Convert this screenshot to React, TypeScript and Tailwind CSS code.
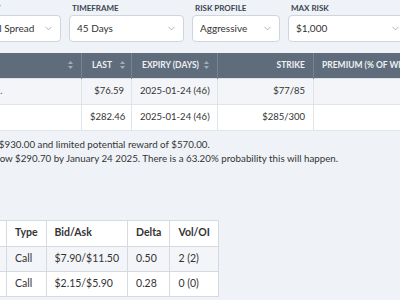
import React from "react";
import { ChevronDown } from "lucide-react";

const SortIcon = () => (
  <svg width="5" height="8" viewBox="0 0 5 8" className="shrink-0 fill-[#a3adb8]">
    <path d="M2.5 0 L5 3 H0 Z" />
    <path d="M2.5 8 L5 5 H0 Z" />
  </svg>
);

interface SelectProps {
  label: string;
  value: string;
  className: string;
}

const Select: React.FC<SelectProps> = ({ label, value, className }) => (
  <div className={`flex shrink-0 flex-col ${className}`}>
    <span className="mb-[2px] h-[9px] pl-[3px] text-[8px] font-bold uppercase leading-[9px] text-[#3a4350]">
      {label}
    </span>
    <div className="flex h-[27px] items-center justify-between rounded-[4px] border border-[#cfd5dc] bg-white pl-[7px] pr-[6px] text-[10px] text-[#333]">
      <span>{value}</span>
      <ChevronDown size={11} strokeWidth={1.5} className="text-[#8a939d]" />
    </div>
  </div>
);

const headCell = "border-x border-[#77838f] px-[8px] text-[8.5px] font-bold uppercase text-[#eef1f4] whitespace-nowrap";
const bodyCell = "border border-[#e0e4e9] px-[8px] whitespace-nowrap";
const legCell = "border border-[#d5dae0] px-[8px] whitespace-nowrap";

const spreads = [
  { name: "Adobe Inc.", last: "$76.59", expiry: "2025-01-24 (46)", strike: "$77/85", premium: "$3.05 (38.1%)" },
  { name: "", last: "$282.46", expiry: "2025-01-24 (46)", strike: "$285/300", premium: "$5.70 (38.0%)" },
];

const legs = [
  { strike: "$285", type: "Call", bidAsk: "$7.90/$11.50", delta: "0.50", volOi: "2 (2)" },
  { strike: "$300", type: "Call", bidAsk: "$2.15/$5.90", delta: "0.28", volOi: "0 (0)" },
];

export default function App() {
  return (
    <div className="h-[300px] w-[400px] overflow-hidden bg-[#eff3f7] font-['Lato',sans-serif] text-[#333]">
      <div className="-ml-[51px] w-[560px] pt-[4px]">
        <div className="flex gap-[8px] pl-[9px]">
          <Select label="Strategy" value="Bull Call Spread" className="w-[103px]" />
          <Select label="Timeframe" value="45 Days" className="w-[115px]" />
          <Select label="Risk Profile" value="Aggressive" className="w-[88px]" />
          <Select label="Max Risk" value="$1,000" className="w-[120px]" />
        </div>

        <table className="mt-[11px] w-[520px] table-fixed border-collapse text-[9.5px]">
          <colgroup>
            <col className="w-[132px]" />
            <col className="w-[50px]" />
            <col className="w-[86px]" />
            <col className="w-[96px]" />
            <col className="w-[156px]" />
          </colgroup>
          <thead>
            <tr className="h-[25px] bg-[#5f6c7b]">
              <th className={headCell}>
                <div className="flex items-center justify-end">
                  <SortIcon />
                </div>
              </th>
              <th className={`${headCell} pr-[6px]`}>
                <div className="flex items-center justify-end gap-[8px]">
                  <span>Last</span>
                  <SortIcon />
                </div>
              </th>
              <th className={`${headCell} pl-[10px]`}>
                <div className="flex items-center justify-between">
                  <span>Expiry (Days)</span>
                  <SortIcon />
                </div>
              </th>
              <th className={`${headCell} text-right`}>Strike</th>
              <th className={`${headCell} text-left`}>Premium (% of Width)</th>
            </tr>
          </thead>
          <tbody>
            {spreads.map((s, i) => (
              <tr key={i} className={`h-[26px] ${i === 0 ? "bg-[#f3f5f8]" : "bg-white"}`}>
                <td className={`${bodyCell} text-[#2c5aa0]`}>{s.name}</td>
                <td className={`${bodyCell} pr-[7px] text-right`}>{s.last}</td>
                <td className={bodyCell}>{s.expiry}</td>
                <td className={`${bodyCell} text-right`}>{s.strike}</td>
                <td className={`${bodyCell} text-right`}>{s.premium}</td>
              </tr>
            ))}
          </tbody>
        </table>

        <div className="mt-[6px] text-[9.75px] leading-[14px]">
          <p className="whitespace-nowrap">Max risk of $930.00 and limited potential reward of $570.00.</p>
          <p className="whitespace-nowrap">
            Must be below $290.70 by January 24 2025. There is a 63.20% probability this will happen.
          </p>
        </div>

        <table className="mt-[55px] table-fixed border-collapse border border-[#d5dae0] text-[10.5px]">
          <colgroup>
            <col className="w-[57px]" />
            <col className="w-[37px]" />
            <col className="w-[72px]" />
            <col className="w-[39px]" />
            <col className="w-[44px]" />
          </colgroup>
          <thead>
            <tr className="h-[26px] bg-white text-left">
              <th className={`${legCell} font-bold text-[#d08a2c]`}>Strike</th>
              <th className={`${legCell} font-bold`}>Type</th>
              <th className={`${legCell} font-bold`}>Bid/Ask</th>
              <th className={`${legCell} font-bold`}>Delta</th>
              <th className={`${legCell} font-bold`}>Vol/OI</th>
            </tr>
          </thead>
          <tbody>
            {legs.map((l, i) => (
              <tr key={i} className={`h-[25px] ${i === 0 ? "bg-[#f3f5f8]" : "bg-white"}`}>
                <td className={legCell}>{l.strike}</td>
                <td className={legCell}>{l.type}</td>
                <td className={legCell}>{l.bidAsk}</td>
                <td className={legCell}>{l.delta}</td>
                <td className={legCell}>{l.volOi}</td>
              </tr>
            ))}
          </tbody>
        </table>
      </div>
    </div>
  );
}
